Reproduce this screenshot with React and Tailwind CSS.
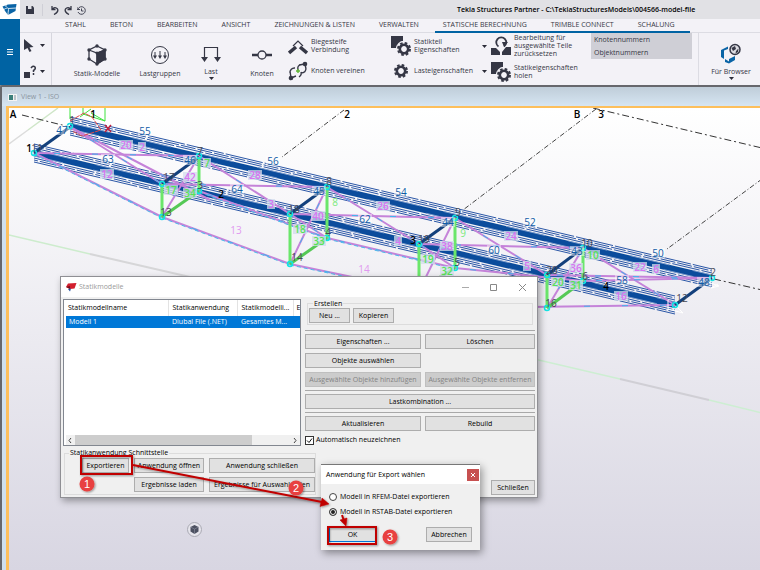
import { useState } from 'react';

const TABS = [
  'STAHL',
  'BETON',
  'BEARBEITEN',
  'ANSICHT',
  'ZEICHNUNGEN & LISTEN',
  'VERWALTEN',
  'STATISCHE BERECHNUNG',
  'TRIMBLE CONNECT',
  'SCHALUNG',
];

// chords: [x1, y1, x2, y2]
const CHORDS = [
  [70, 126, 712, 278],
  [34, 153, 675, 305],
];

// [offset from the chord axis, dash pattern, dash offset]
const WIRES = [
  [-9, '38 2', 0],
  [-7, '15 2', 5],
  [-5, '28 2', 11],
  [5, '31 2', 2],
  [7, '17 2', 13],
  [9, '36 2', 6],
];

const NAVY = [
  [34, 153, 70, 127],
  [162, 184, 199, 157],
  [290, 214, 327, 187],
  [419, 244, 455, 218],
  [547, 275, 583, 248],
  [675, 305, 712, 278],
];

const GREEN = [
  [199, 157, 199, 191],
  [162, 184, 162, 217],
  [162, 217, 199, 191],
  [327, 187, 327, 238],
  [290, 214, 290, 264],
  [290, 264, 327, 238],
  [455, 218, 455, 268],
  [419, 244, 419, 290],
  [419, 290, 455, 268],
  [583, 248, 583, 281],
  [547, 275, 547, 308],
  [547, 308, 583, 281],
];

const VIOLET = [
  [34, 153, 199, 156],
  [70, 127, 162, 184],
  [70, 127, 210, 200],
  [34, 153, 162, 217],
  [162, 217, 290, 264],
  [290, 264, 419, 291],
  [162, 184, 327, 187],
  [199, 156, 162, 217],
  [199, 156, 290, 214],
  [199, 191, 327, 238],
  [327, 238, 455, 268],
  [455, 268, 583, 281],
  [327, 187, 290, 264],
  [327, 187, 419, 244],
  [290, 214, 455, 218],
  [290, 214, 327, 238],
  [455, 218, 419, 291],
  [455, 218, 547, 275],
  [419, 244, 583, 248],
  [419, 244, 455, 268],
  [583, 248, 547, 308],
  [583, 248, 675, 305],
  [547, 275, 712, 278],
  [583, 281, 712, 278],
  [530, 307, 675, 305],
];

const NODES = [
  [70, 126], [34, 153], [199, 156], [162, 184], [199, 191], [162, 217],
  [327, 187], [290, 214], [327, 238], [290, 264], [455, 218], [419, 244],
  [455, 268], [583, 248], [547, 275], [583, 281], [547, 308], [675, 305], [712, 278],
];

// [text, x, y, kind]
const LABELS = [
  ['55', 145, 135, 'blue'],
  ['63', 108, 163, 'blue'],
  ['56', 273, 165, 'blue'],
  ['64', 237, 193, 'blue'],
  ['54', 401, 196, 'blue'],
  ['62', 365, 223, 'blue'],
  ['52', 530, 226, 'blue'],
  ['60', 494, 254, 'blue'],
  ['50', 658, 257, 'blue'],
  ['58', 622, 284, 'blue'],
  ['47', 62, 134, 'blue'],
  ['46', 190, 164, 'blue'],
  ['45', 319, 195, 'blue'],
  ['44', 448, 226, 'blue'],
  ['43', 577, 255, 'blue'],
  ['48', 704, 286, 'blue'],
  ['20', 126, 149, 'pink'],
  ['2', 142, 151, 'pink'],
  ['12', 107, 178, 'pink'],
  ['28', 255, 179, 'pink'],
  ['42', 190, 181, 'pink'],
  ['3', 271, 208, 'pink'],
  ['26', 383, 210, 'pink'],
  ['40', 318, 220, 'pink'],
  ['4', 398, 245, 'pink'],
  ['24', 511, 240, 'pink'],
  ['38', 447, 250, 'pink'],
  ['5', 527, 270, 'pink'],
  ['22', 640, 271, 'pink'],
  ['6', 656, 273, 'pink'],
  ['36', 576, 272, 'pink'],
  ['16', 621, 300, 'pink'],
  ['13', 236, 234, 'pinkPlain'],
  ['14', 364, 273, 'pinkPlain'],
  ['7', 207, 167, 'green'],
  ['17', 171, 194, 'green'],
  ['34', 190, 197, 'green'],
  ['8', 335, 206, 'greenPlain'],
  ['18', 300, 233, 'green'],
  ['33', 319, 245, 'green'],
  ['9', 463, 237, 'greenPlain'],
  ['19', 428, 263, 'green'],
  ['32', 447, 275, 'green'],
  ['10', 593, 259, 'green'],
  ['20', 558, 286, 'green'],
  ['31', 576, 289, 'green'],
  ['1', 72, 124, 'gray'],
  ['11', 37, 152, 'gray'],
  ['7', 200, 155, 'gray'],
  ['17', 169, 181, 'gray'],
  ['3', 200, 189, 'gray'],
  ['13', 166, 216, 'gray'],
  ['8', 329, 185, 'gray'],
  ['18', 294, 213, 'gray'],
  ['4', 328, 236, 'gray'],
  ['14', 297, 261, 'gray'],
  ['9', 458, 216, 'gray'],
  ['19', 424, 243, 'gray'],
  ['5', 457, 266, 'gray'],
  ['10', 587, 247, 'gray'],
  ['20', 552, 274, 'gray'],
  ['6', 585, 280, 'gray'],
  ['16', 551, 307, 'gray'],
  ['12', 682, 302, 'gray'],
  ['2', 713, 276, 'gray'],
  ['A', 13, 118, 'black'],
  ['1', 93, 118, 'black'],
  ['1', 29, 152, 'black'],
  ['2', 221, 198, 'black'],
  ['3', 413, 244, 'black'],
  ['4', 606, 290, 'black'],
  ['2', 347, 118, 'black'],
  ['B', 577, 118, 'black'],
  ['3', 601, 118, 'black'],
];

const LABEL_FILL = {
  blue: '#0f5ba6',
  pink: '#d873f2',
  pinkPlain: '#e19af0',
  green: '#55e455',
  greenPlain: '#7bea7b',
  gray: '#484852',
  black: '#000000',
};

function Seg({ p, ...rest }) {
  return <line x1={p[0]} y1={p[1]} x2={p[2]} y2={p[3]} {...rest} />;
}

function TrussModel() {
  return (
    <svg
      className="block h-full w-full"
      viewBox="9 108 751 462"
      preserveAspectRatio="xMinYMin slice"
      aria-label="Fachwerkmodell"
    >
      {/* construction lines */}
      <Seg p={[9, 144, 28, 130]} stroke="#dcdcdc" strokeWidth="1.5" />
      <Seg p={[28, 130, 58, 108]} stroke="#cfe6c8" strokeWidth="1.5" />
      <Seg p={[9, 235, 90, 254]} stroke="#cdeccd" strokeWidth="1.5" />
      <Seg p={[90, 254, 190, 277]} stroke="#d6d6d8" strokeWidth="2" />
      <Seg p={[530, 358, 620, 379]} stroke="#cdeed2" strokeWidth="1.5" />
      <Seg p={[620, 379, 709, 400]} stroke="#d0cfd5" strokeWidth="2" />
      <Seg p={[709, 400, 762, 413]} stroke="#cdeed2" strokeWidth="1.5" />

      {/* grid */}
      <g stroke="#333" strokeWidth="1" strokeDasharray="7 3 2 3">
        <Seg p={[22, 115, 70, 127]} />
        <Seg p={[593, 108, 762, 148]} />
        <Seg p={[714, 279, 762, 290]} />
      </g>
      <g stroke="#444" strokeWidth="1" strokeDasharray="5 2 1 2">
        <Seg p={[344, 110, 282, 157]} />
        <Seg p={[596, 109, 463, 210]} />
        <Seg p={[762, 179, 667, 249]} />
      </g>

      {/* chord solids with their wire outlines */}
      {CHORDS.map((c, i) => (
        <g key={i}>
          {WIRES.map(([o, dash, shift]) => (
            <line
              key={o}
              x1={c[0]}
              y1={c[1] + o}
              x2={c[2]}
              y2={c[3] + o}
              stroke="#2a56a6"
              strokeWidth="1"
              strokeDasharray={dash}
              strokeDashoffset={shift}
            />
          ))}
          <Seg p={c} stroke="#0b4c9c" strokeWidth="6" />
          <Seg p={[c[0], c[1] - 3, c[2], c[3] - 3]} stroke="#7d9ccd" strokeWidth="1" strokeDasharray="40 24" />
          <Seg p={[c[0], c[1] + 3, c[2], c[3] + 3]} stroke="#7d9ccd" strokeWidth="1" strokeDasharray="30 31" />
        </g>
      ))}

      {VIOLET.map((p, i) => (
        <g key={i}>
          <Seg p={p} stroke="#c583d9" strokeWidth="2" />
          <Seg p={p} stroke="#3fb6ee" strokeWidth="1" strokeDasharray="6 32" strokeDashoffset={-20 - i * 3} />
        </g>
      ))}
      <g stroke="#4bbcec" strokeWidth="1" strokeDasharray="4 3">
        <Seg p={[34, 154, 162, 218]} />
        <Seg p={[162, 218, 290, 265]} />
        <Seg p={[290, 265, 419, 292]} />
        <Seg p={[327, 239, 455, 269]} />
        <Seg p={[199, 192, 327, 239]} />
      </g>
      {NAVY.map((p, i) => (
        <Seg key={i} p={p} stroke="#13407c" strokeWidth="3" />
      ))}
      {GREEN.map((p, i) => (
        <Seg key={i} p={p} stroke={i % 3 === 2 ? '#55c956' : '#6be66b'} strokeWidth="3" />
      ))}

      {/* origin marker and supports */}
      <path d="M70 108V119 M83 108V114L105 121 M91 113L105 121V108 M80 117L91 109" fill="none" stroke="#3fe23f" strokeWidth="1" />
      <path d="M70 121L84 113L92 117L101 130L82 136L72 131" fill="none" stroke="#e04848" strokeWidth="1" strokeDasharray="5 1" />
      <path d="M105 125L111 132 M111 125L105 132" stroke="#c0203c" strokeWidth="1.5" />
      <path d="M668 300V309L683 313L677 307 M705 281L719 286L711 288L718 284" fill="none" stroke="#fff" strokeWidth="1" />

      {NODES.map(([x, y]) => (
        <circle key={`${x}-${y}`} cx={x} cy={y} r="2.5" fill="none" stroke="#12e4e4" strokeWidth="1.5" />
      ))}

      {LABELS.map(([text, x, y, kind], i) => (
        <g key={i}>
          {(kind === 'blue' || kind === 'pink' || kind === 'green') && (
            <rect
              x={x - 3 * text.length - 1}
              y={y - 9}
              width={6 * text.length + 2}
              height="10"
              fill={kind === 'blue' ? '#ffffff' : '#d3dcec'}
              opacity={kind === 'blue' ? 0.45 : 0.75}
            />
          )}
          <text
            x={x}
            y={y}
            textAnchor="middle"
            fontFamily="Open Sans, sans-serif"
            fontSize="10"
            fontWeight={kind === 'black' || kind === 'pink' || kind === 'green' ? 600 : 500}
            fill={LABEL_FILL[kind]}
          >
            {text}
          </text>
        </g>
      ))}
    </svg>
  );
}

/* ── Icons ───────────────────────────────────────────────────── */
function Gear({ x, y }) {
  return (
    <g transform={`translate(${x} ${y})`} fill="none" stroke="#353745">
      <circle r="6.4" stroke="#f3f2f7" strokeWidth="3.5" />
      <circle r="4.2" strokeWidth="2.6" />
      <circle r="6" strokeWidth="2" strokeDasharray="2.6 2.11" />
    </g>
  );
}

function GearPartIcon() {
  return (
    <svg width="20" height="20" viewBox="0 0 20 20">
      <path d="M0 0H12V5L5 12H0Z" fill="#353745" />
      <Gear x={13} y={13} />
    </svg>
  );
}

function GearIcon() {
  return (
    <svg width="20" height="20" viewBox="0 0 20 20">
      <Gear x={10} y={10} />
    </svg>
  );
}

function ResetIcon() {
  return (
    <svg width="20" height="20" viewBox="0 0 20 20">
      <path d="M0 12H5L9 16V19H0Z M11 19V16L15 11H20V19Z" fill="#353745" />
      <path d="M7.5 10.5A5 5 0 1 1 13 10.5" fill="none" stroke="#353745" strokeWidth="1.8" />
      <path d="M11 6H17L13 11Z" fill="#353745" />
    </svg>
  );
}

function StiffIcon() {
  return (
    <svg width="20" height="20" viewBox="0 0 20 20" stroke="#353745">
      <path d="M1 17L8 11M19 17L12 11" strokeWidth="3.5" />
      <path d="M5 10L10 5L15 10" fill="none" strokeWidth="1.2" />
    </svg>
  );
}

function MergeIcon() {
  return (
    <svg width="20" height="20" viewBox="0 0 20 20" fill="none" stroke="#353745" strokeWidth="1.4">
      <path d="M3 17L8 15M3 17L2 10M17 3L18 8M17 3L11 4M2 12A4.500 4.500 0 0 1 7 7M11 16Q14 14 13 11M10 9Q9 4 13 4M18 7Q18 12 13 12" />
      <circle cx="3" cy="17" r="1.600" fill="#353745" />
      <circle cx="17" cy="3" r="1.600" fill="#353745" />
      <path d="M10 8V12M8 10H12" stroke="#5cb531" />
    </svg>
  );
}

function ModelIcon() {
  return (
    <svg width="20" height="22" viewBox="0 0 20 22" fill="none" stroke="#353745" strokeWidth="1.3">
      <path d="M10 2L18 6V15L10 20L2 15V6ZM2 6L10 9L18 6M10 9V20" />
      <path d="M10 9L18 6V15L10 20Z" fill="#353745" />
      <g fill="#353745" stroke="none">
        <circle cx="10" cy="2" r="1.700" /><circle cx="18" cy="6" r="1.700" />
        <circle cx="2" cy="6" r="1.700" /><circle cx="2" cy="15" r="1.700" />
        <circle cx="18" cy="15" r="1.700" /><circle cx="10" cy="20" r="1.700" />
        <circle cx="10" cy="9" r="1.500" />
      </g>
    </svg>
  );
}

function LoadGroupIcon() {
  return (
    <svg width="20" height="20" viewBox="0 0 20 20" fill="none" stroke="#353745" strokeWidth="1">
      <circle cx="10" cy="10" r="8.500" />
      <path d="M5 7V11M10 6V12M15 7V11" />
      <path d="M3 10.500H7L5 14ZM8 10.500H12L10 14ZM13 10.500H17L15 14Z" fill="#353745" stroke="none" />
    </svg>
  );
}

function LoadIcon() {
  return (
    <svg width="20" height="18" viewBox="0 0 20 18" fill="none" stroke="#353745" strokeWidth="1.200">
      <path d="M3.500 12V2.500H16.500V12" />
      <path d="M0 12H7L3.500 17ZM13 12H20L16.500 17Z" fill="#353745" stroke="none" />
    </svg>
  );
}

function NodeIcon() {
  return (
    <svg width="22" height="12" viewBox="0 0 22 12" fill="none" stroke="#353745">
      <path d="M1 6H7M15 6H21" strokeWidth="2.500" />
      <circle cx="11" cy="6" r="4" strokeWidth="1.300" />
    </svg>
  );
}

function BrowserIcon() {
  return (
    <svg width="22" height="22" viewBox="0 0 22 22" fill="none">
      <path d="M1 7L4 5.500V16L1 14ZM4 5.500L8 3.500V6L4 7.500ZM5 16L9 18.500V16L15 13V17L9 20.500L5 19Z" fill="#0a64a6" />
      <circle cx="15" cy="6.500" r="5" fill="#dcdce2" stroke="#353745" strokeWidth="1.500" />
      <path d="M11.500 5L15 3L16 6L13 8ZM16 8L18.500 5.500L18 9L15.500 10.500Z" fill="#353745" />
    </svg>
  );
}

function Caret() {
  return (
    <svg width="5" height="3" viewBox="0 0 5 3" className="shrink-0">
      <path d="M0 0H5L2.500 3Z" fill="#2b2c38" />
    </svg>
  );
}

/* ── Ribbon ──────────────────────────────────────────────────── */
function BigTool({ icon, label, caret, className }) {
  return (
    <button type="button" className={`flex shrink-0 flex-col items-center ${className}`}>
      <span className={caret ? 'grid h-[34px] place-items-center pt-2' : 'grid h-9 place-items-center pt-2'}>{icon}</span>
      <span className="whitespace-nowrap leading-[10px]">{label}</span>
      {caret && <Caret />}
    </button>
  );
}

function RowTool({ icon, lines, caret }) {
  return (
    <button type="button" className="flex w-full items-center gap-[3px] text-left">
      <span className="shrink-0">{icon}</span>
      <span className="flex-1 whitespace-nowrap leading-[8px]">
        {lines.map((l) => (
          <span key={l} className="block">{l}</span>
        ))}
      </span>
      {caret && <span className="pr-1"><Caret /></span>}
    </button>
  );
}

function Header({ tab, onTab }) {
  return (
    <header className="flex h-[85px] shrink-0 text-[#353745]">
      <div className="flex w-5 shrink-0 flex-col">
        <div className="h-[19px] bg-white">
          <svg width="20" height="19" viewBox="0 0 20 19">
            <path d="M2.500 6.500L8 4.500L16.500 4L15.500 11L8 15L5 11Z" fill="#0a64a6" />
            <path d="M3 10Q9 6 8.500 9.500T8 15M8.500 8.500L16 8M6 5V7" fill="none" stroke="#fff" strokeWidth=".8" />
          </svg>
        </div>
        <button type="button" aria-label="Menü" className="grid flex-1 place-items-center bg-[#0063a3]">
          <svg width="6" height="6" viewBox="0 0 6 6" stroke="#fff"><path d="M0 .5H6M0 3H6M0 5.500H6" /></svg>
        </button>
      </div>

      <div className="flex min-w-0 flex-1 flex-col bg-[#f3f2f7]">
        <div className="flex h-[19px] items-center bg-[#e1e1e5] pt-px">
          <button type="button" aria-label="Speichern" className="ml-[6px]">
            <svg width="8" height="8" viewBox="0 0 8 8"><path d="M0 0H6.500L8 1.500V8H0Z" fill="#353745" /><path d="M2 0H5.500V3H2Z" fill="#e1e1e5" /></svg>
          </button>
          <span className="ml-2 h-3 w-px bg-[#cfcfd6]" />
          <button type="button" aria-label="Rückgängig" className="ml-2">
            <svg width="8" height="9" viewBox="0 0 8 9" fill="none" stroke="#353745" strokeWidth="1.300"><path d="M1 0V3.500H4.500M1 3.500Q4 0 6.500 3Q8 6 3 8.500" /></svg>
          </button>
          <button type="button" aria-label="Wiederholen" className="ml-[5px]">
            <svg width="8" height="9" viewBox="0 0 8 9" fill="none" stroke="#353745" strokeWidth="1.300"><path d="M7 0V3.500H3.500M7 3.500Q4 0 1.500 3Q0 6 5 8.500" /></svg>
          </button>
          <button type="button" aria-label="Verlauf" className="ml-[5px]">
            <svg width="9" height="9" viewBox="0 0 9 9" fill="none" stroke="#454757"><path d="M1 3A3.800 3.800 0 1 1 1 6M0 1V3.500H3M4.500 2.500V5H6.500" /></svg>
          </button>
          <h1 className="flex-1 truncate pl-[371px] font-semibold text-black">
            Tekla Structures Partner - C:\TeklaStructuresModels\004566-model-file
          </h1>
        </div>

        <nav className="flex h-[14px] items-center gap-6 border-b border-[#dcdce3] pl-[45px]">
          {TABS.map((t) => (
            <button
              key={t}
              type="button"
              onClick={() => onTab(t)}
              className="relative h-[14px] whitespace-nowrap"
            >
              {t}
              {t === tab && <span className="absolute -left-2 top-3 h-[2px] w-[255px] bg-[#0063a3]" />}
            </button>
          ))}
        </nav>

        <div className="flex flex-1 font-medium">
          <div className="flex w-8 shrink-0 flex-col justify-around border-r border-[#d6d6de] pl-1">
            <button type="button" aria-label="Auswählen" className="flex items-center gap-[6px]">
              <svg width="10" height="13" viewBox="0 0 10 13"><path d="M0 0L9.500 8L5.500 8.500L7.500 12L5.500 13L3.500 9L0 11Z" fill="#353745" /></svg>
              <Caret />
            </button>
            <button type="button" aria-label="Abfragen" className="flex items-center gap-1">
              <svg width="12" height="14" viewBox="0 0 12 14"><path d="M0 7H6V13H0Z" fill="#353745" /><path d="M7 3Q9 0 11 2Q12 4 9.500 5.500V7M9.500 8V10" fill="none" stroke="#353745" strokeWidth="1.500" /></svg>
              <Caret />
            </button>
          </div>

          <BigTool className="ml-[13px] w-16" icon={<ModelIcon />} label="Statik-Modelle" />
          <BigTool className="w-[62px]" icon={<LoadGroupIcon />} label="Lastgruppen" />
          <BigTool className="w-10" icon={<LoadIcon />} label="Last" caret />
          <BigTool className="ml-2 w-[46px]" icon={<NodeIcon />} label="Knoten" />

          <div className="ml-[3px] flex w-[103px] shrink-0 flex-col justify-between pb-1 pt-[3px]">
            <RowTool icon={<StiffIcon />} lines={['Biegesteife', 'Verbindung']} />
            <RowTool icon={<MergeIcon />} lines={['Knoten vereinen']} />
          </div>
          <div className="flex w-[100px] shrink-0 flex-col justify-between pb-1 pt-[3px]">
            <RowTool icon={<GearPartIcon />} lines={['Statikteil', 'Eigenschaften']} caret />
            <RowTool icon={<GearIcon />} lines={['Lasteigenschaften']} caret />
          </div>
          <div className="flex w-[100px] shrink-0 flex-col justify-between pb-[3px] pt-px">
            <RowTool icon={<ResetIcon />} lines={['Bearbeitung für', 'ausgewählte Teile', 'zurücksetzen']} />
            <RowTool icon={<GearPartIcon />} lines={['Statikeigenschaften', 'holen']} />
          </div>
          <div className="flex h-[26px] w-[101px] shrink-0 flex-col justify-around bg-[#cfcfd6] pl-[3px] leading-[10px]">
            <button type="button" className="text-left">Knotennummern</button>
            <button type="button" className="text-left">Objektnummern</button>
          </div>
          <div className="ml-[6px] flex flex-1 border-l border-[#dcdce3]">
            <BigTool className="w-16" icon={<BrowserIcon />} label="Für Browser" caret />
          </div>
        </div>
      </div>
    </header>
  );
}

/* ── Dialogs ─────────────────────────────────────────────────── */
function Btn({ children, className = '', ...rest }) {
  return (
    <button
      type="button"
      className={`h-[15px] whitespace-nowrap border border-[#adadad] bg-[#e1e1e1] text-center leading-[13px] text-black disabled:border-[#bfbfbf] disabled:bg-[#cccccc] disabled:text-[#838383] ${className}`}
      {...rest}
    >
      {children}
    </button>
  );
}

function Rule() {
  return <hr className="my-[3px] border-t border-[#a8a8a8]" />;
}

function ModelsDialog() {
  return (
    <section
      aria-label="Statikmodelle"
      className="absolute left-[51px] top-[168px] w-[478px] border border-[#8f8f94] bg-[#f0f0f0] font-medium leading-[10px] text-black shadow-[2px_3px_7px_rgba(0,0,0,0.35)]"
    >
      <div className="flex h-5 items-center bg-white pl-[5px] text-[#9a9a9a]">
        <svg width="11" height="9" viewBox="0 0 11 9">
          <path d="M2 0.500L10.500 0L8.500 5.500L4 6L0 4Z" fill="#d21f2e" />
          <path d="M0 4L4 3L4 6Z" fill="#7d0d18" /><path d="M2 6L5 5.500L4 8.500Z" fill="#1f4fa0" />
        </svg>
        <h2 className="ml-[2px] flex-1">Statikmodelle</h2>
        <button type="button" aria-label="Minimieren" className="grid w-7 place-items-center"><svg width="7" height="7" stroke="#aaa"><path d="M0 3.500H7" /></svg></button>
        <button type="button" aria-label="Maximieren" className="grid w-7 place-items-center"><svg width="7" height="7" fill="none" stroke="#888"><path d="M.5 .5H6.500V6.500H.5Z" /></svg></button>
        <button type="button" aria-label="Dialog verlassen" className="grid w-[30px] place-items-center"><svg width="7" height="7" stroke="#888"><path d="M0 0L7 7M7 0L0 7" /></svg></button>
      </div>

      <div className="flex gap-1 px-[2px] pt-[2px]">
        <div className="flex h-[147px] min-w-0 flex-1 flex-col overflow-hidden border border-[#828790] bg-white pl-[2px]">
          <table className="w-full table-fixed border-collapse text-left">
            <thead>
              <tr className="h-4">
                <th className="w-[102px] border-r border-[#e3e3e3] pl-[2px] font-medium">Statikmodellname</th>
                <th className="w-[69px] border-r border-[#e3e3e3] pl-1 font-medium">Statikanwendung</th>
                <th className="w-[56px] whitespace-nowrap border-r border-[#e3e3e3] pl-1 font-medium">Statikmodelli...</th>
                <th className="pl-[3px] font-medium">E</th>
              </tr>
            </thead>
            <tbody>
              <tr className="h-3 bg-[#0078d7] text-white">
                <td className="pl-[3px]">Modell 1</td>
                <td className="pl-1">Dlubal File (.NET)</td>
                <td className="whitespace-nowrap pl-1">Gesamtes M...</td>
                <td />
              </tr>
            </tbody>
          </table>
          <div className="mt-auto flex h-[10px] items-center bg-[#f0f0f0]">
            <svg width="9" height="9" viewBox="0 0 9 9" fill="none" stroke="#444"><path d="M5 2L3 4.500L5 7" /></svg>
            <div className="h-[10px] w-[177px] bg-[#cdcdcd]" />
            <svg width="9" height="9" viewBox="0 0 9 9" fill="none" stroke="#444" className="ml-auto"><path d="M3 2L5 4.500L3 7" /></svg>
          </div>
        </div>

        <div className="w-[230px]">
          <fieldset className="mx-[2px] flex gap-[3px] border border-[#dcdcdc] px-px pb-px">
            <legend className="ml-1 px-px leading-[9px]">Erstellen</legend>
            <Btn className="w-[41px]">Neu ...</Btn>
            <Btn className="w-[41px]">Kopieren</Btn>
          </fieldset>
          <div className="h-[2px]" />
          <Rule />
          <div className="grid grid-cols-[116px_1fr] gap-1">
            <Btn>Eigenschaften ...</Btn>
            <Btn>Löschen</Btn>
            <Btn>Objekte auswählen</Btn>
            <span />
            <Btn disabled>Ausgewählte Objekte hinzufügen</Btn>
            <Btn disabled>Ausgewählte Objekte entfernen</Btn>
          </div>
          <Rule />
          <Btn className="block w-full">Lastkombination ...</Btn>
          <Rule />
          <div className="grid grid-cols-[116px_1fr] gap-1">
            <Btn>Aktualisieren</Btn>
            <Btn>Rebuild</Btn>
          </div>
          <label className="mt-1 flex items-center gap-[2px]">
            <span className="relative h-[9px] w-[9px]">
              <input type="checkbox" defaultChecked className="peer block h-[9px] w-[9px] appearance-none border border-[#333] bg-white" />
              <svg width="9" height="9" viewBox="0 0 9 9" className="pointer-events-none absolute inset-0 hidden peer-checked:block" fill="none" stroke="#111"><path d="M2 4.500L4 6.500L7 2.500" /></svg>
            </span>
            Automatisch neuzeichnen
          </label>
        </div>
      </div>

      <div className="flex items-end justify-between pb-[2px] pl-[3px] pr-[2px] pt-[2px]">
        <fieldset className="grid w-[252px] grid-cols-[47px_70px_1fr] gap-x-[5px] gap-y-1 border border-[#dcdcdc] pb-[2px] pl-[17px]">
          <legend className="-ml-[13px] px-px leading-[10px]">Statikanwendung Schnittstelle</legend>
          <Btn>Exportieren</Btn>
          <Btn>Anwendung öffnen</Btn>
          <Btn>Anwendung schließen</Btn>
          <span />
          <Btn>Ergebnisse laden</Btn>
          <Btn>Ergebnisse für Auswahl laden</Btn>
        </fieldset>
        <Btn className="w-11">Schließen</Btn>
      </div>
    </section>
  );
}

function Radio({ value, current, onChange, children }) {
  return (
    <label className="flex items-center gap-[3px]">
      <input
        type="radio"
        name="export-target"
        checked={current === value}
        onChange={() => onChange(value)}
        className="h-2 w-2 appearance-none rounded-full border border-[#444] bg-white checked:bg-[#222] checked:shadow-[inset_0_0_0_1px_#fff]"
      />
      {children}
    </label>
  );
}

function ExportDialog() {
  const [target, setTarget] = useState('rstab');

  return (
    <section
      aria-label="Anwendung für Export wählen"
      className="absolute left-[312px] top-[356px] w-[159px] border-t border-[#777] bg-[#f0f0f0] pb-2 font-medium leading-[10px] text-black shadow-[2px_3px_8px_rgba(0,0,0,0.4)]"
    >
      <div className="flex h-[19px] items-center justify-between bg-white pl-[5px] pr-px">
        <h2>Anwendung für Export wählen</h2>
        <button type="button" aria-label="Dialog verlassen" className="grid h-3 w-3 place-items-center bg-[#c75050]">
          <svg width="4" height="4" stroke="#fff"><path d="M0 0L4 4M4 0L0 4" /></svg>
        </button>
      </div>
      <div className="flex flex-col gap-[5px] px-2 pt-2">
        <Radio value="rfem" current={target} onChange={setTarget}>Modell in RFEM-Datei exportieren</Radio>
        <Radio value="rstab" current={target} onChange={setTarget}>Modell in RSTAB-Datei exportieren</Radio>
      </div>
      <div className="mt-[10px] flex justify-between px-2">
        <Btn className="w-[47px] outline outline-1 -outline-offset-1 outline-[#0078d7]">OK</Btn>
        <Btn className="w-[46px]">Abbrechen</Btn>
      </div>
    </section>
  );
}

function Callouts() {
  return (
    <svg
      className="pointer-events-none absolute left-[61px] top-[342px]"
      width="350"
      height="100"
      viewBox="70 450 350 100"
    >
      <defs>
        <filter id="soft" x="-20%" y="-20%" width="150%" height="150%">
          <feDropShadow dx="1" dy="1" stdDeviation="1" floodOpacity="0.4" />
        </filter>
      </defs>
      <g fill="none" stroke="#c00000" strokeWidth="2" filter="url(#soft)">
        <path d="M81 456H132V474H81Z" />
        <path d="M328 527H376V544H328Z" />
        <path d="M133 465L322 502" />
        <path d="M342 515L344 521" />
        <path d="M329 504L320 506.500L322 498Z M346 526L340 520L347 518Z" fill="#c00000" strokeWidth="0.500" />
      </g>
      {[[87, 484, '1'], [296, 488, '2'], [390, 537, '3']].map(([x, y, n]) => (
        <g key={n}>
          <circle cx={x} cy={y} r="7.500" fill="#e8403f" filter="url(#soft)" />
          <text x={x} y={y + 4} textAnchor="middle" fontSize="11" fill="#fff" fontFamily="Liberation Sans, sans-serif">{n}</text>
        </g>
      ))}
    </svg>
  );
}

export default function App() {
  const [tab, setTab] = useState('STATISCHE BERECHNUNG');

  return (
    <div className="flex h-screen flex-col overflow-hidden bg-[#8a8a8f] font-['Open_Sans',sans-serif] text-[7px]">
      <Header tab={tab} onTab={setTab} />

      <main className="flex min-h-0 flex-1 flex-col rounded-tl-[3px] border-l-2 border-t-2 border-[#66676c] bg-[#cfe0ef]">
        <div className="flex h-[19px] shrink-0 items-center gap-1 bg-gradient-to-b from-[#bfcdd9] to-[#d6e5f2] pl-[6px] pt-px text-[7px] text-[#8b959f]">
          <svg width="9" height="7" viewBox="0 0 9 7"><path d="M0 0H9V7H0Z" fill="#f4f4f4" /><path d="M1 1H5V6H1Z" fill="#3b7f7a" /><path d="M6 1H8V6H6Z" fill="#b9c2c8" /></svg>
          View 1 - ISO
        </div>
        <div className="relative ml-1 min-h-0 flex-1 border-l-[3px] border-t-2 border-[#fdbf5c] bg-gradient-to-b from-white to-[#d8d6e2]">
          <TrussModel />
          <ModelsDialog />
          <ExportDialog />
          <Callouts />
          <button
            type="button"
            aria-label="Ansicht drehen"
            className="absolute left-[178px] top-[414px] grid h-[15px] w-[15px] place-items-center rounded-full border border-[#aaaab4] bg-[#e6e5ec]"
          >
            <svg width="9" height="9" viewBox="0 0 9 9"><path d="M4.500 0L8.500 2V6.500L4.500 9L.5 6.500V2Z" fill="#4c5061" /><path d="M.5 2L4.500 4L8.500 2M4.500 4V9" fill="none" stroke="#8d91a0" strokeWidth=".6" /></svg>
          </button>
        </div>
      </main>
    </div>
  );
}
